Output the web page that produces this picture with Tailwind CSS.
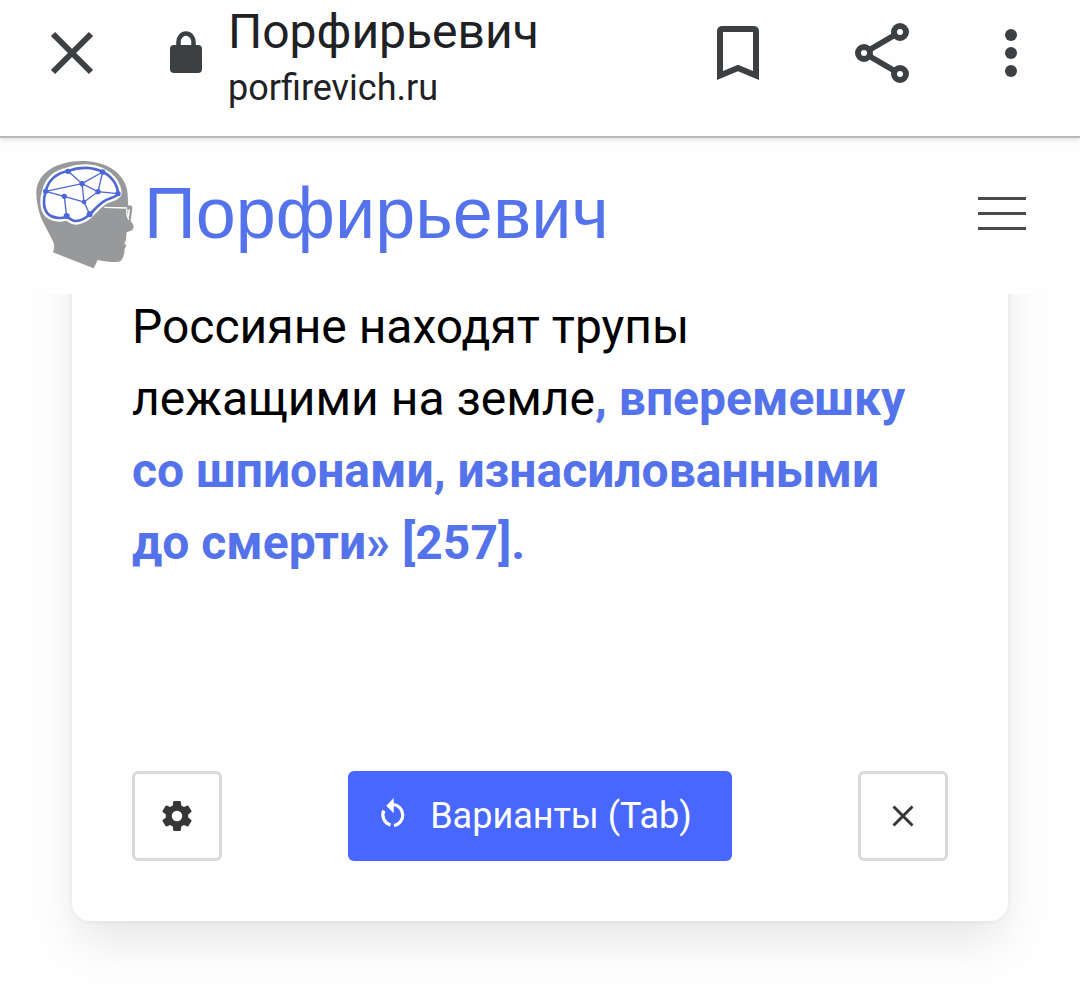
<!DOCTYPE html>
<html lang="ru">
  <head>
    <meta charset="UTF-8" />
    <meta name="viewport" content="width=device-width, initial-scale=1.0" />
    <title>Порфирьевич</title>
    <script src="https://cdn.jsdelivr.net/npm/@tailwindcss/browser@4"></script>
  </head>
  <body class="bg-[#fefefe] font-[Roboto,sans-serif] text-[#202124]">
    <!-- Browser bar -->
    <header
      class="relative flex h-[138px] items-start border-b-2 border-[#b8b8b8] pl-12 pr-[42px] shadow-[0_2px_5px_rgba(0,0,0,0.12)]"
    >
      <button type="button" aria-label="Закрыть" class="mt-7 shrink-0">
        <svg class="size-12" viewBox="0 0 48 48" fill="none" stroke="#3c4043" stroke-width="6">
          <path d="M5 6 43 44M43 6 5 44" />
        </svg>
      </button>
      <svg class="ml-[72px] mt-7 h-12 w-9 shrink-0" viewBox="0 0 36 48" fill="none">
        <path d="M10.500 20V14a7.500 8.500 0 0 1 15 0V20" stroke="#3c4043" stroke-width="4.500" />
        <rect x="2" y="17" width="32" height="28" rx="4" fill="#3c4043" />
      </svg>
      <div class="ml-6 min-w-0 flex-1 pt-0.5">
        <p class="text-[48px] leading-[60px]">Порфирьевич</p>
        <p class="text-[36px] leading-[52px]">porfirevich.ru</p>
      </div>
      <button type="button" aria-label="Закладка" class="mt-6 shrink-0">
        <svg class="h-15 w-12" viewBox="0 0 48 60" fill="none" stroke="#3c4043" stroke-width="6">
          <path d="M6 51.500V7.500Q6 5 8.500 5H39.500Q42 5 42 7.500V51.500L24 44Z" />
        </svg>
      </button>
      <button type="button" aria-label="Поделиться" class="ml-[90px] mt-[23px] shrink-0">
        <svg class="size-15" viewBox="0 0 60 60" fill="none" stroke="#3c4043" stroke-width="6">
          <path d="M12 30 48 9M12 30 48 51" stroke-width="5.500" />
          <g fill="#fefefe">
            <circle cx="12" cy="30" r="6" />
            <circle cx="48" cy="9" r="6" />
            <circle cx="48" cy="51" r="6" />
          </g>
        </svg>
      </button>
      <button type="button" aria-label="Меню" class="ml-[84px] mt-7 shrink-0">
        <svg class="h-[50px] w-[42px]" viewBox="0 0 42 50" fill="#3c4043">
          <circle cx="15" cy="7" r="6" />
          <circle cx="15" cy="25" r="6" />
          <circle cx="15" cy="43" r="6" />
        </svg>
      </button>
    </header>

    <!-- Site navbar -->
    <nav class="flex h-[156px] items-center justify-between pb-1.5 pl-9 pr-[54px]">
      <a href="/" class="flex items-end">
        <svg class="h-[108px] w-[100px] translate-y-0.5" viewBox="33 33 300 324">
          <path
            fill="#97999b"
            d="M34 132C32 70 95 33 170 33C240 33 294 65 306 118C309 135 309 150 309 166L320 167Q323 170 321 182L317 214Q326 222 326 232Q324 242 313 244L305 247L303 267Q303 275 298 280L304 287L299 296Q298 320 288 332Q276 341 218 330L206 355L84 307Q91 290 85 276Q70 247 50 208Q35 170 34 132Z"
          />
          <path
            fill="#fefefe"
            stroke="#fefefe"
            stroke-width="22"
            stroke-linejoin="round"
            d="M62 124C70 90 95 70 129 63C165 49 205 51 233 66C260 78 278 105 279 131C275 142 255 143 240 152C222 162 208 180 194 193C180 207 165 212 151 213C140 213 136 205 125 200C110 206 85 206 70 193C53 176 55 145 62 124Z"
          />
          <path
            fill="none"
            stroke="#5068cf"
            stroke-width="8"
            d="M62 124C70 90 95 70 129 63C165 49 205 51 233 66C260 78 278 105 279 131C275 142 255 143 240 152C222 162 208 180 194 193C180 207 165 212 151 213C140 213 136 205 125 200C110 206 85 206 70 193C53 176 55 145 62 124Z"
          />
          <path
            fill="none"
            stroke="#5068cf"
            stroke-width="4"
            d="M129 63 171 101 233 66 219 125 279 131M62 124 171 101 219 125 177 156 171 101M62 124 118 139 177 156 194 193M118 139 125 200"
          />
          <g fill="#4c67dc">
            <circle cx="129" cy="64" r="8" />
            <circle cx="233" cy="66" r="8" />
            <circle cx="171" cy="101" r="8" />
            <circle cx="62" cy="124" r="8" />
            <circle cx="219" cy="125" r="8" />
            <circle cx="279" cy="131" r="8" />
            <circle cx="118" cy="139" r="8" />
            <circle cx="177" cy="156" r="7" />
            <circle cx="125" cy="198" r="9" />
            <circle cx="194" cy="193" r="9" />
          </g>
          <path fill="none" stroke="#fefefe" stroke-width="4" d="M238 172 306 174M306 177Q303 195 312 209" />
          <path fill="#fefefe" d="M310 179 315 178 312 202 308 199Z" />
        </svg>
        <span class="ml-2 pb-1.5 font-['Liberation_Sans',sans-serif] text-[72px] leading-[96px] text-[#5472ea]">Порфирьевич</span>
      </a>
      <button type="button" aria-label="Навигация" class="flex flex-col gap-3">
        <span class="h-[3px] w-12 bg-[#4a4a4a]"></span>
        <span class="h-[3px] w-12 bg-[#4a4a4a]"></span>
        <span class="h-[3px] w-12 bg-[#4a4a4a]"></span>
      </button>
    </nav>

    <!-- Editor, scrolled under the navbar -->
    <main class="overflow-hidden px-[72px] pb-20">
      <section
        class="-mt-24 rounded-[18px] bg-[#fefefe] px-15 pb-15 pt-[93px] shadow-[0_24px_48px_-6px_rgba(10,10,10,0.1),0_0_0_3px_rgba(10,10,10,0.02)]"
      >
        <div contenteditable="true" class="min-h-[480px] pr-6 text-[48px] leading-[72px] text-black">
          <p>
            Россияне находят трупы лежащими на земле<strong class="font-bold text-[#5472ea]">, вперемешку со шпионами, изнасилованными до смерти» [257].</strong>
          </p>
        </div>
        <div class="flex items-center justify-between">
          <button
            type="button"
            aria-label="Настройки"
            class="flex size-[90px] items-center justify-center rounded-md border-3 border-[#dbdbdb]"
          >
            <svg class="size-9" viewBox="0 0 24 24" fill="#363636">
              <path
                d="M12 15.500A3.500 3.500 0 0 1 8.500 12 3.500 3.500 0 0 1 12 8.500a3.500 3.500 0 0 1 3.500 3.500 3.500 3.500 0 0 1-3.500 3.500m7.430-2.530c.04-.32.07-.64.07-.97s-.03-.66-.07-1l2.110-1.630c.19-.15.24-.42.12-.64l-2-3.460c-.12-.22-.39-.31-.61-.22l-2.490 1c-.52-.39-1.060-.73-1.690-.98l-.37-2.650A.506.506 0 0 0 14 2h-4c-.25 0-.46.18-.5.42l-.37 2.650c-.63.25-1.170.59-1.690.98l-2.490-1c-.22-.09-.49 0-.61.22l-2 3.460c-.13.22-.07.49.12.64L4.570 11c-.04.34-.07.67-.07 1s.03.65.07.97l-2.110 1.660c-.19.15-.25.42-.12.64l2 3.460c.12.22.39.3.61.22l2.490-1.010c.52.4 1.060.74 1.690.99l.37 2.650c.04.24.25.42.5.42h4c.25 0 .46-.18.5-.42l.37-2.650c.63-.26 1.170-.59 1.690-.99l2.490 1.010c.22.08.49 0 .61-.22l2-3.460c.12-.22.07-.49-.12-.64z"
              />
            </svg>
          </button>
          <button
            type="button"
            class="flex h-[90px] w-96 items-center justify-center gap-[18px] rounded-md bg-[#4767ff] pr-3 text-[36px] text-white"
          >
            <svg class="size-9 overflow-visible" viewBox="0 0 36 36">
              <path fill="#fefefe" d="M17.700 0V15.300L10.300 7.700Z" />
              <path
                fill="none"
                stroke="#fefefe"
                stroke-width="3.200"
                d="M17 6.500A10.600 10.600 0 0 1 18 27.500M7.800 12.500A10.600 10.600 0 0 0 14.500 27"
              />
            </svg>
            Варианты (Tab)
          </button>
          <button
            type="button"
            aria-label="Очистить"
            class="flex size-[90px] items-center justify-center rounded-md border-3 border-[#dbdbdb]"
          >
            <svg class="size-6" viewBox="0 0 24 24" fill="none" stroke="#363636" stroke-width="3">
              <path d="M2.500 2.500 21.500 21.500M21.500 2.500 2.500 21.500" />
            </svg>
          </button>
        </div>
      </section>
    </main>
  </body>
</html>
